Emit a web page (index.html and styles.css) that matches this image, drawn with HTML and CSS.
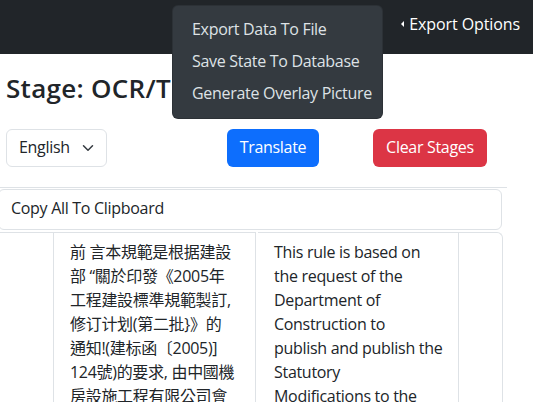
FILE: index.html
```html
<!DOCTYPE html>
<html lang="en">
<head>
<meta charset="utf-8">
<title>Stage: OCR/Translate</title>
<link rel="stylesheet" href="styles.css">
</head>
<body>
<nav class="navbar">
  <div class="nav-drop">
    <a class="nav-link"><span class="caret"></span>Export Options</a>
  </div>
</nav>
<ul class="menu">
  <li class="menu-item">Export Data To File</li>
  <li class="menu-item">Save State To Database</li>
  <li class="menu-item">Generate Overlay Picture</li>
</ul>
<main class="page">
  <h2 class="title">Stage: OCR/Translate</h2>
  <div class="toolbar">
    <div class="select">English<svg class="chev" width="12" height="12" viewBox="0 0 16 16"><path d="M2 5l6 6 6-6" fill="none" stroke="#343a40" stroke-width="2" stroke-linecap="round" stroke-linejoin="round"/></svg></div>
    <button class="btn btn-blue">Translate</button>
    <button class="btn btn-red">Clear Stages</button>
  </div>
  <section class="stages">
    <div class="copy-card">Copy All To Clipboard</div>
    <div class="table">
      <div class="box box-a">
        <div class="cell cell-first"></div>
        <div class="cell cell-text cjk">前 言本規範是根据建設<br>部 “關於印發《2005年<br>工程建設標準規範製訂,<br>修订计划(第二批}》的<br>通知!(建标函〔2005)]<br>124號)的要求, 由中國機<br>房設施工程有限公司會</div>
      </div>
      <div class="box box-b">
        <div class="cell cell-text en">This rule is based on<br>the request of the<br>Department of<br>Construction to<br>publish and publish the<br>Statutory<br>Modifications to the</div>
        <div class="cell cell-last"></div>
      </div>
    </div>
  </section>
</main>
</body>
</html>
```
FILE: styles.css
```css
* { box-sizing: border-box; }
html, body { margin: 0; padding: 0; overflow: hidden; }
body {
  font-family: "Open Sans", "Noto Sans CJK TC", sans-serif;
  font-size: 16px;
  line-height: 24px;
  letter-spacing: -0.3px;
  color: #212529;
  background: #fff;
  width: 533px;
  height: 402px;
}
.navbar {
  height: 54px;
  background: #212529;
  display: flex;
  justify-content: flex-end;
  align-items: center;
  padding-right: 13px;
}
.nav-link {
  color: #fff;
  display: flex;
  align-items: center;
  margin-top: -6px;
  letter-spacing: -0.1px;
}
.caret {
  width: 0; height: 0;
  border-top: 3px solid transparent;
  border-bottom: 3px solid transparent;
  border-right: 3px solid #fff;
  margin-right: 5px;
}
.menu {
  position: absolute;
  left: 172px;
  top: 5px;
  width: 211px;
  margin: 0;
  padding: 7px 0 9px;
  list-style: none;
  background: #343a40;
  border: 1px solid rgba(0,0,0,.15);
  border-radius: 6px;
  z-index: 10;
}
.menu-item {
  padding: 4px 19px;
  color: #dee2e6;
  white-space: nowrap;
}
.page { padding: 0 0 0 6px; }
.title {
  margin: 19px 0 0;
  font-size: 26px;
  line-height: 31px;
  font-weight: 600;
  letter-spacing: 0.3px;
}
.toolbar {
  display: flex;
  align-items: center;
  margin-top: 25px;
}
.select {
  width: 101px;
  height: 38px;
  border: 1px solid #dee2e6;
  border-radius: 6px;
  padding: 5px 12px 7px;
  display: flex;
  align-items: center;
  justify-content: space-between;
}
.chev { margin-top: 2px; }
.btn {
  font: inherit;
  letter-spacing: inherit;
  height: 38px;
  border: 0;
  border-radius: 6px;
  color: #fff;
  padding: 0 0 2px;
  white-space: nowrap;
  text-align: center;
}
.btn-blue { background: #0d6efd; width: 92px; margin-left: 120px; }
.btn-red { background: #dc3545; width: 114px; margin-left: 54px; }
.stages {
  margin: 20px 0 0 -6px;
  width: 507px;
  border-top: 1px solid #dee2e6;
  padding-top: 1px;
}
.copy-card {
  margin-left: -2px;
  width: 504px;
  height: 41px;
  border: 1px solid #dee2e6;
  border-radius: 6px;
  padding: 6px 12px 10px;
}
.table {
  display: flex;
  margin-top: 2px;
  margin-left: -2px;
  height: 200px;
}
.box {
  display: flex;
  border-top: 1px solid #dee2e6;
}
.box-a {
  width: 258px;
  border-left: 1px solid #dee2e6;
  border-right: 1px solid #dee2e6;
}
.box-b {
  margin-left: 2px;
  width: 245px;
  border-right: 1px solid #dee2e6;
  border-top-right-radius: 6px;
}
.cell-first { width: 55px; border-right: 1px solid #dee2e6; }
.cell-text { padding: 7px 16px; white-space: nowrap; }
.box-a .cell-text { flex: 1; }
.box-b .cell-text { width: 201px; border-right: 1px solid #dee2e6; }
.cell-last { flex: 1; }
```
